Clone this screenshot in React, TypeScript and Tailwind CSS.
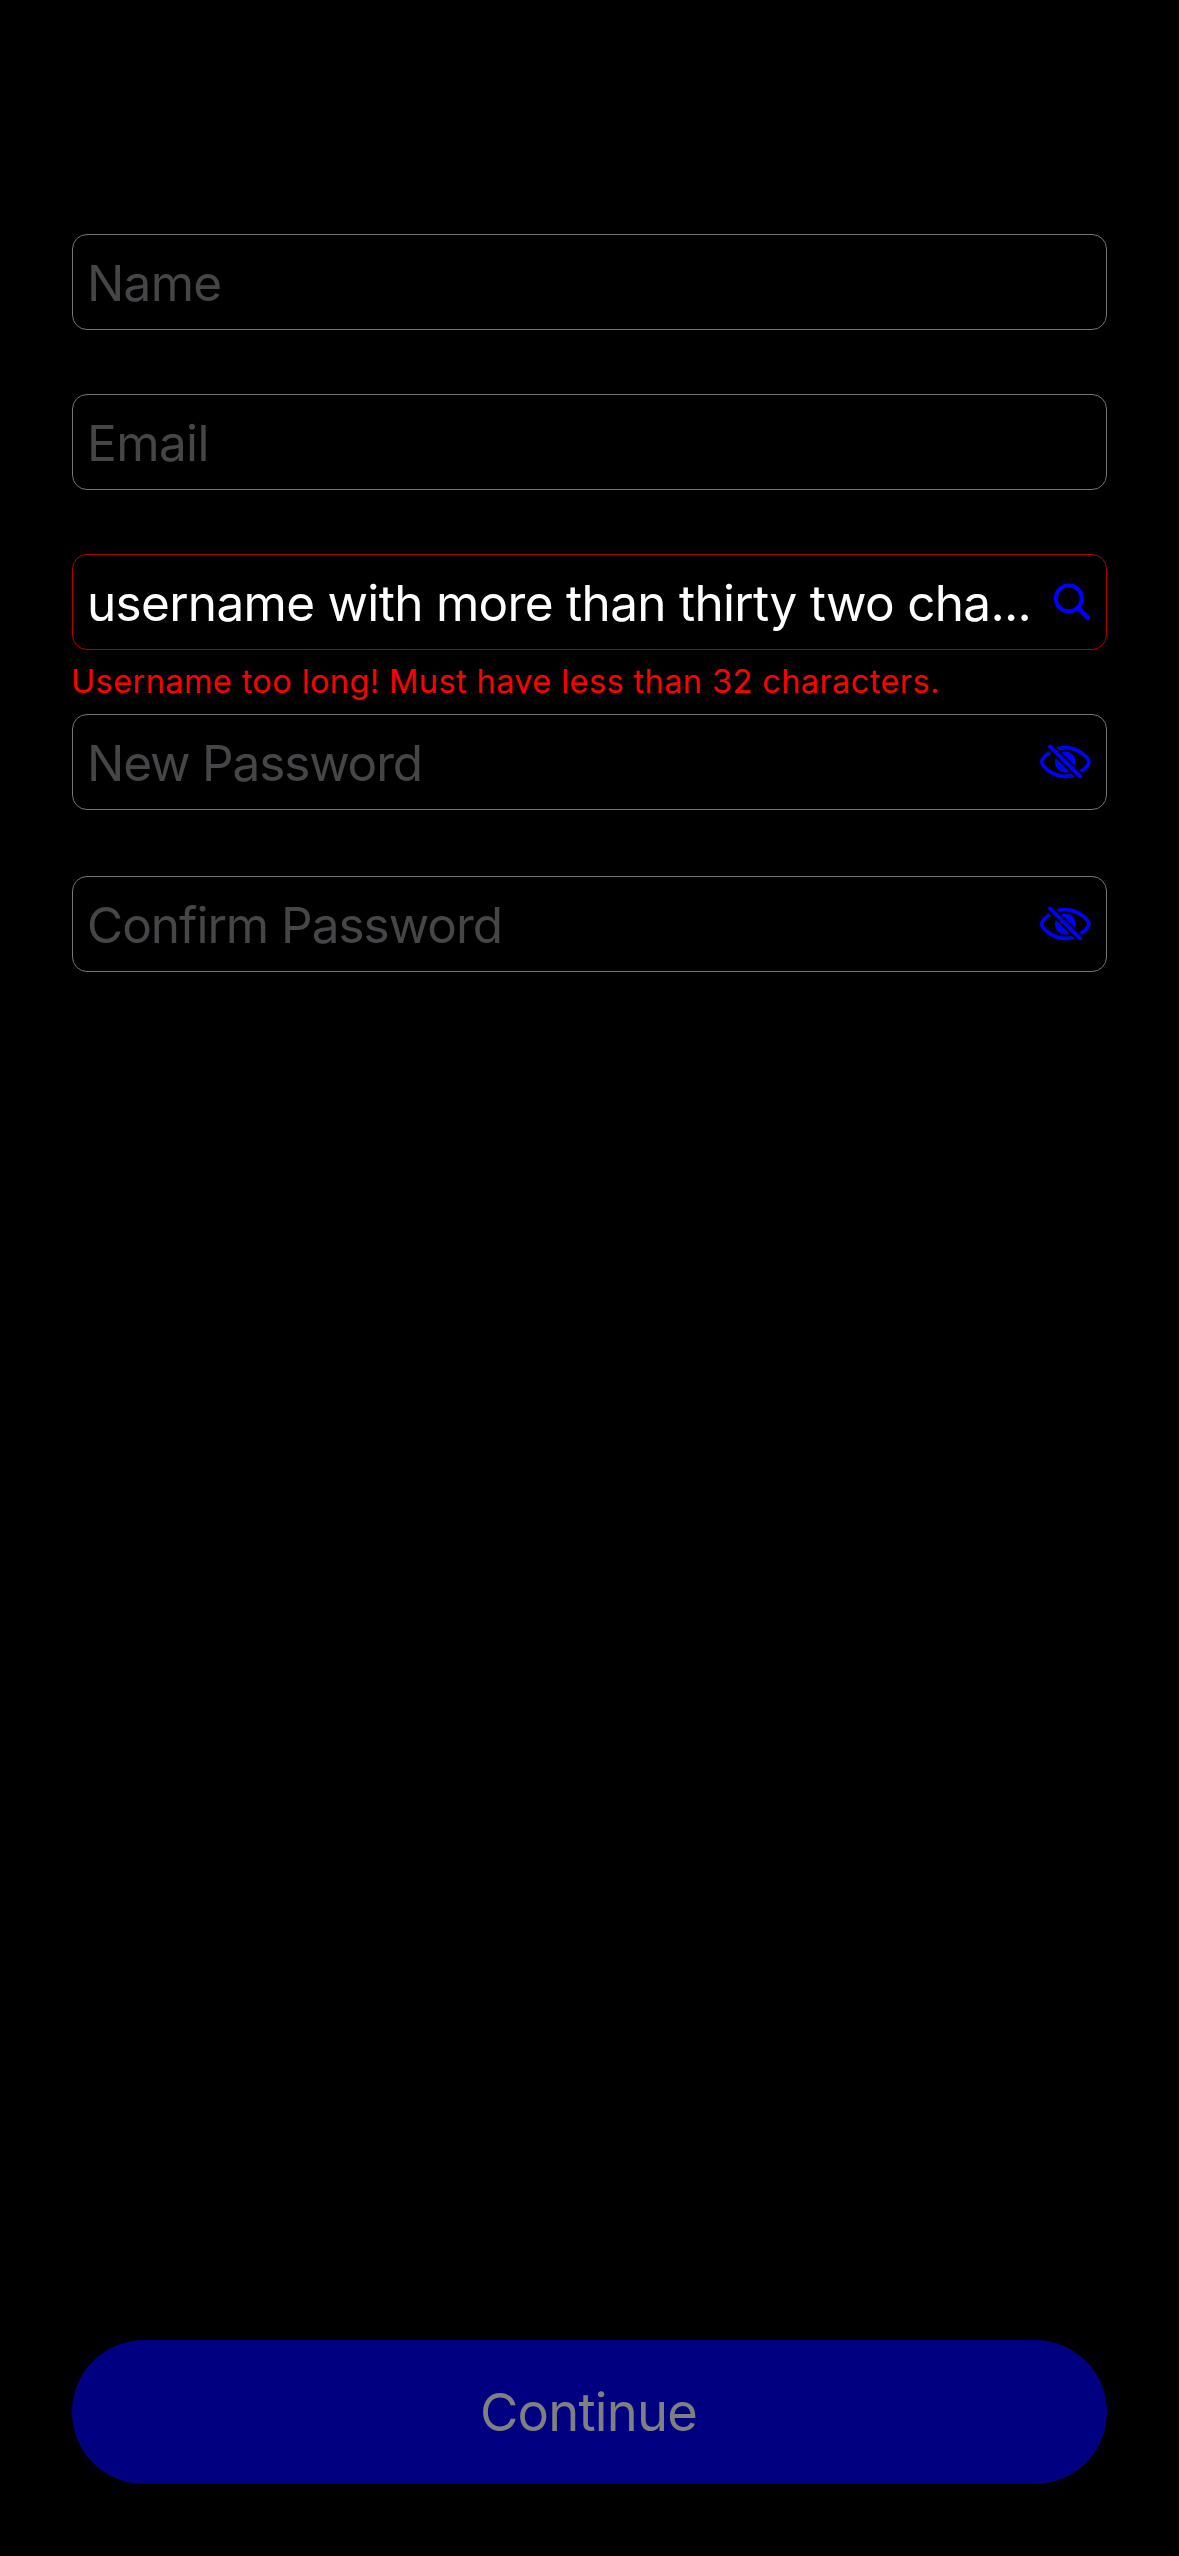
import type { ReactNode } from "react";

function SearchIcon() {
  return (
    <svg className="h-10 w-10 shrink-0" viewBox="0 0 40 40" fill="none" stroke="#0000ff" strokeLinecap="round">
      <circle cx="17.8" cy="16.4" r="12.9" strokeWidth="4.1" />
      <path d="M27.6 26.4 L36.8 35.6" strokeWidth="4.8" />
    </svg>
  );
}

function EyeSlashIcon() {
  return (
    <svg className="h-9 w-[52px] shrink-0" viewBox="0 0 52 36" fill="none">
      <path
        d="M2.7 18 C2.7 14.6 12.7 3.6 26.3 3.6 C39.9 3.6 49.9 14.6 49.9 18 C49.9 21.4 39.9 32.4 26.3 32.4 C12.7 32.4 2.7 21.4 2.7 18 Z"
        stroke="#0000ff"
        strokeWidth="3.6"
      />
      <circle cx="26.3" cy="18" r="10.4" fill="#0000ff" />
      <path d="M5.9 -2.4 L45.9 37.2" stroke="#000" strokeWidth="8.2" />
      <path d="M11 2.5 L41 32.3" stroke="#0000ff" strokeWidth="3.8" strokeLinecap="round" />
    </svg>
  );
}

type FieldProps = { label: string; value?: string; error?: string; icon?: ReactNode; tracking: string };

function Field({ label, value, error, icon, tracking }: FieldProps) {
  return (
    <div className="h-40">
      <div
        className={`flex h-24 items-center rounded-[15px] border pl-[14px] pr-[15px] ${error ? "border-[#b30000]" : "border-[#757575]"}`}
      >
        <span
          className={`flex-1 whitespace-nowrap pt-0.5 text-[49.5px] leading-[60px] ${tracking} ${value ? "text-white" : "text-[#464648]"}`}
        >
          {value ?? label}
        </span>
        {icon}
      </div>
      {error && (
        <p className="-ml-px mt-3 whitespace-nowrap text-[32.5px] leading-[40px] tracking-[0.4px] text-[#ff0000]">{error}</p>
      )}
    </div>
  );
}

export default function App() {
  return (
    <main className="flex h-[2556px] w-[1179px] flex-col bg-black px-[72px] pb-[72px] pt-[234px] font-['Inter',sans-serif]">
      <Field label="Name" tracking="tracking-[-0.7px]" />
      <Field label="Email" tracking="tracking-[-0.6px]" />
      <Field
        label="Username"
        value="username with more than thirty two cha..."
        error="Username too long! Must have less than 32 characters."
        icon={<SearchIcon />}
        tracking="tracking-[-0.7px]"
      />
      <Field label="New Password" icon={<EyeSlashIcon />} tracking="tracking-[-1.15px]" />
      <div className="mt-0.5">
        <Field label="Confirm Password" icon={<EyeSlashIcon />} tracking="tracking-[-1px]" />
      </div>
      <button className="mt-auto flex h-36 shrink-0 items-center justify-center rounded-full bg-[#000080] text-[52.5px] leading-[64px] tracking-[-0.8px] text-[#808080]">
        <span className="-ml-0.5">Continue</span>
      </button>
    </main>
  );
}
